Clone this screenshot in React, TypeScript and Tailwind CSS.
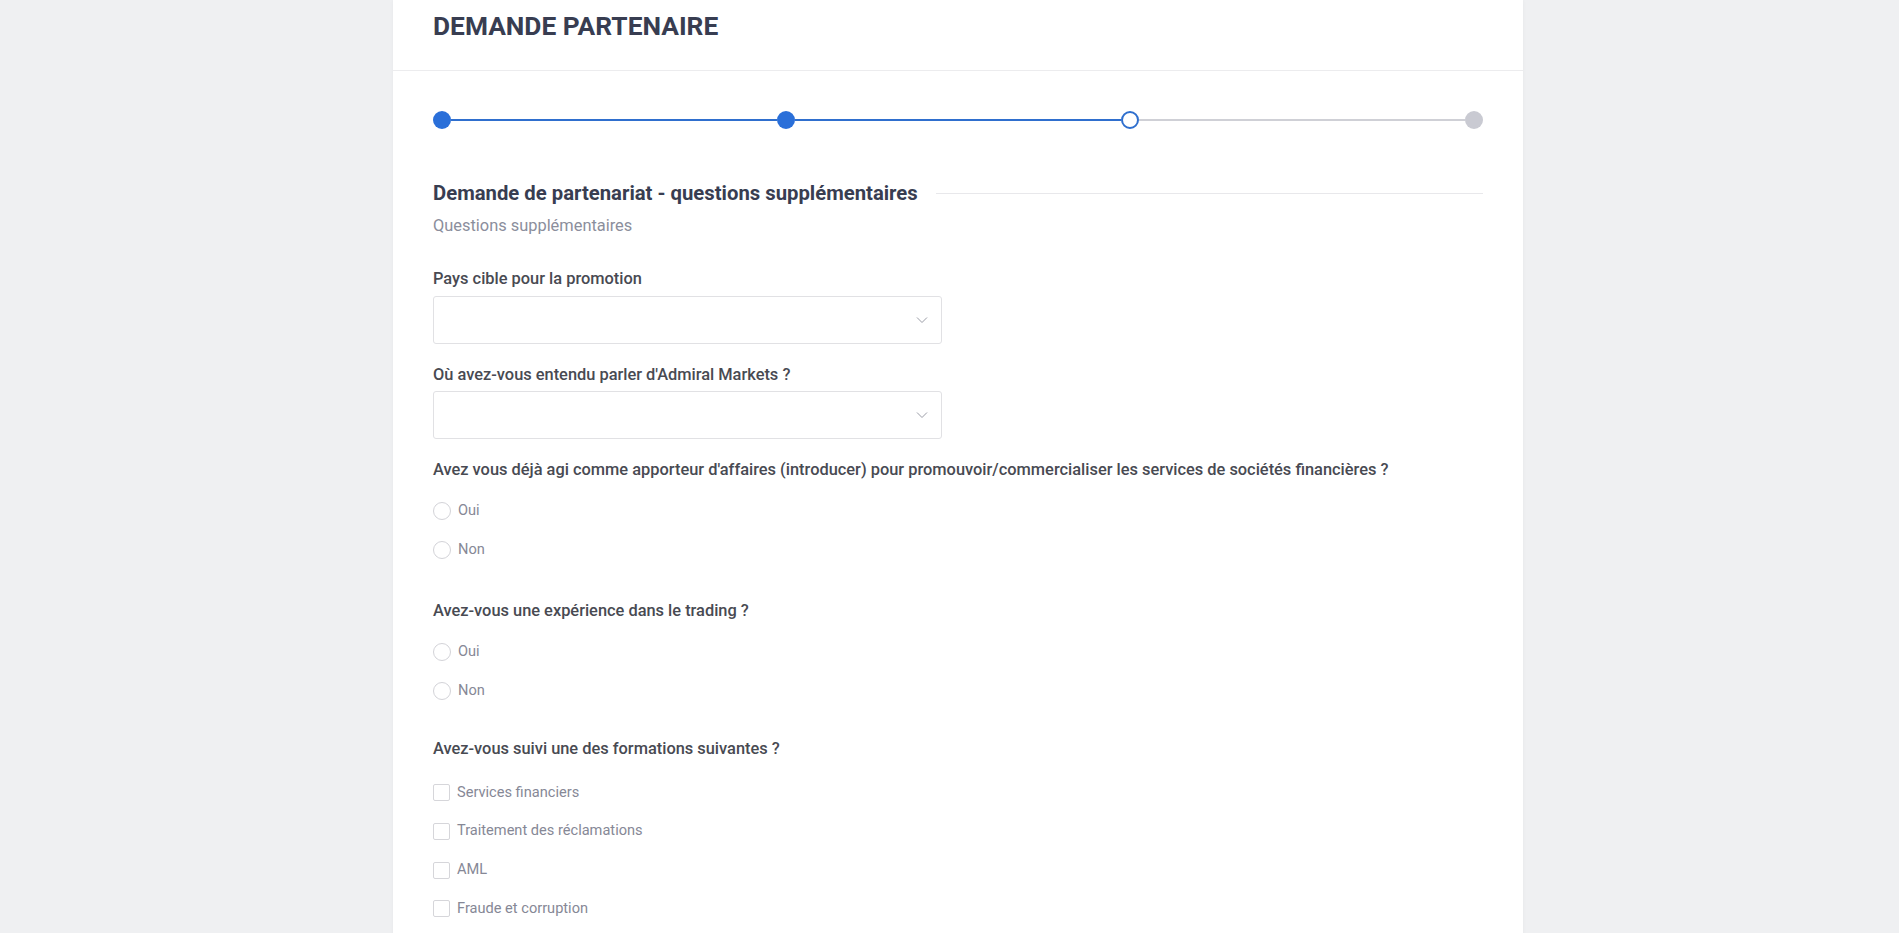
import React from "react";

function Chevron() {
  return (
    <svg width="12" height="8" viewBox="0 0 12 8" fill="none">
      <path d="M1 1.5L6 6.5L11 1.5" stroke="#9a9ca6" strokeWidth="1" />
    </svg>
  );
}

function Select({ label }: { label: string }) {
  return (
    <div className="flex flex-col">
      <div className="text-[16.4px] leading-[22px] font-medium text-[#484a52]">{label}</div>
      <div className="mt-[5.5px] w-[509px] h-[48px] border border-[#e1e1e4] rounded-[3px] bg-white flex items-center justify-end pr-[13px]">
        <Chevron />
      </div>
    </div>
  );
}

function Radio({ label }: { label: string }) {
  return (
    <div className="h-[38.7px] flex items-center gap-[7px]">
      <span className="w-[18px] h-[18px] rounded-full border border-[#d3d3d8] bg-white" />
      <span className="text-[14.6px] text-[#868896]">{label}</span>
    </div>
  );
}

function Check({ label }: { label: string }) {
  return (
    <div className="h-[38.75px] flex items-center gap-[7px]">
      <span className="w-[17px] h-[17px] rounded-[2px] border border-[#d6d6da] bg-white" />
      <span className="text-[14.6px] text-[#868896]">{label}</span>
    </div>
  );
}

export default function App() {
  return (
    <div
      className="min-h-[933px] bg-[#eff0f2] flex justify-center"
      style={{ fontFamily: "Roboto, 'Noto Sans', Arial, sans-serif" }}
    >
      <div className="w-[1130px] bg-white shadow-[0_0_4px_rgba(0,0,0,0.04)] ml-[17px]">
        <div className="h-[71px] border-b border-[#ececee] px-[40px] pt-[11px]">
          <h1 className="text-[26.3px] leading-[30px] font-bold text-[#383d51]">
            DEMANDE PARTENAIRE
          </h1>
        </div>
        <div className="px-[40px] pt-[40px]">
          <div className="flex items-center">
            <span className="w-[18px] h-[18px] rounded-full bg-[#2a6fd9]" />
            <span className="flex-1 h-[2px] bg-[#2f6fce]" />
            <span className="w-[18px] h-[18px] rounded-full bg-[#2a6fd9]" />
            <span className="flex-1 h-[2px] bg-[#2f6fce]" />
            <span className="w-[18px] h-[18px] rounded-full bg-white border-2 border-[#2f6fce]" />
            <span className="flex-1 h-[2px] bg-[#cfd0d6]" />
            <span className="w-[18px] h-[18px] rounded-full bg-[#c9cad2]" />
          </div>

          <div className="mt-[52px] flex items-center gap-[18px]">
            <h2 className="text-[20.3px] leading-[24px] font-bold text-[#383d51] whitespace-nowrap">
              Demande de partenariat - questions supplémentaires
            </h2>
            <span className="flex-1 h-px bg-[#e8e8eb]" />
          </div>
          <div className="mt-[10px] text-[16.4px] leading-[22px] text-[#8b8e9c]">Questions supplémentaires</div>

          <div className="mt-[31px] flex flex-col gap-[20px]">
            <Select label="Pays cible pour la promotion" />
            <Select label="Où avez-vous entendu parler d'Admiral Markets ?" />
          </div>

          <div className="mt-[19.5px]">
            <div className="text-[16.4px] leading-[22px] font-medium text-[#484a52]">
              Avez vous déjà agi comme apporteur d'affaires (introducer) pour promouvoir/commercialiser les services de sociétés financières ?
            </div>
            <div className="mt-[11px] flex flex-col">
              <Radio label="Oui" />
              <Radio label="Non" />
            </div>
          </div>

          <div className="mt-[31px]">
            <div className="text-[16.4px] leading-[22px] font-medium text-[#484a52]">
              Avez-vous une expérience dans le trading ?
            </div>
            <div className="mt-[11px] flex flex-col">
              <Radio label="Oui" />
              <Radio label="Non" />
            </div>
          </div>

          <div className="mt-[28px]">
            <div className="text-[16.4px] leading-[22px] font-medium text-[#484a52]">
              Avez-vous suivi une des formations suivantes ?
            </div>
            <div className="mt-[13px] flex flex-col">
              <Check label="Services financiers" />
              <Check label="Traitement des réclamations" />
              <Check label="AML" />
              <Check label="Fraude et corruption" />
            </div>
          </div>
          <div className="h-[40px]" />
        </div>
      </div>
    </div>
  );
}
